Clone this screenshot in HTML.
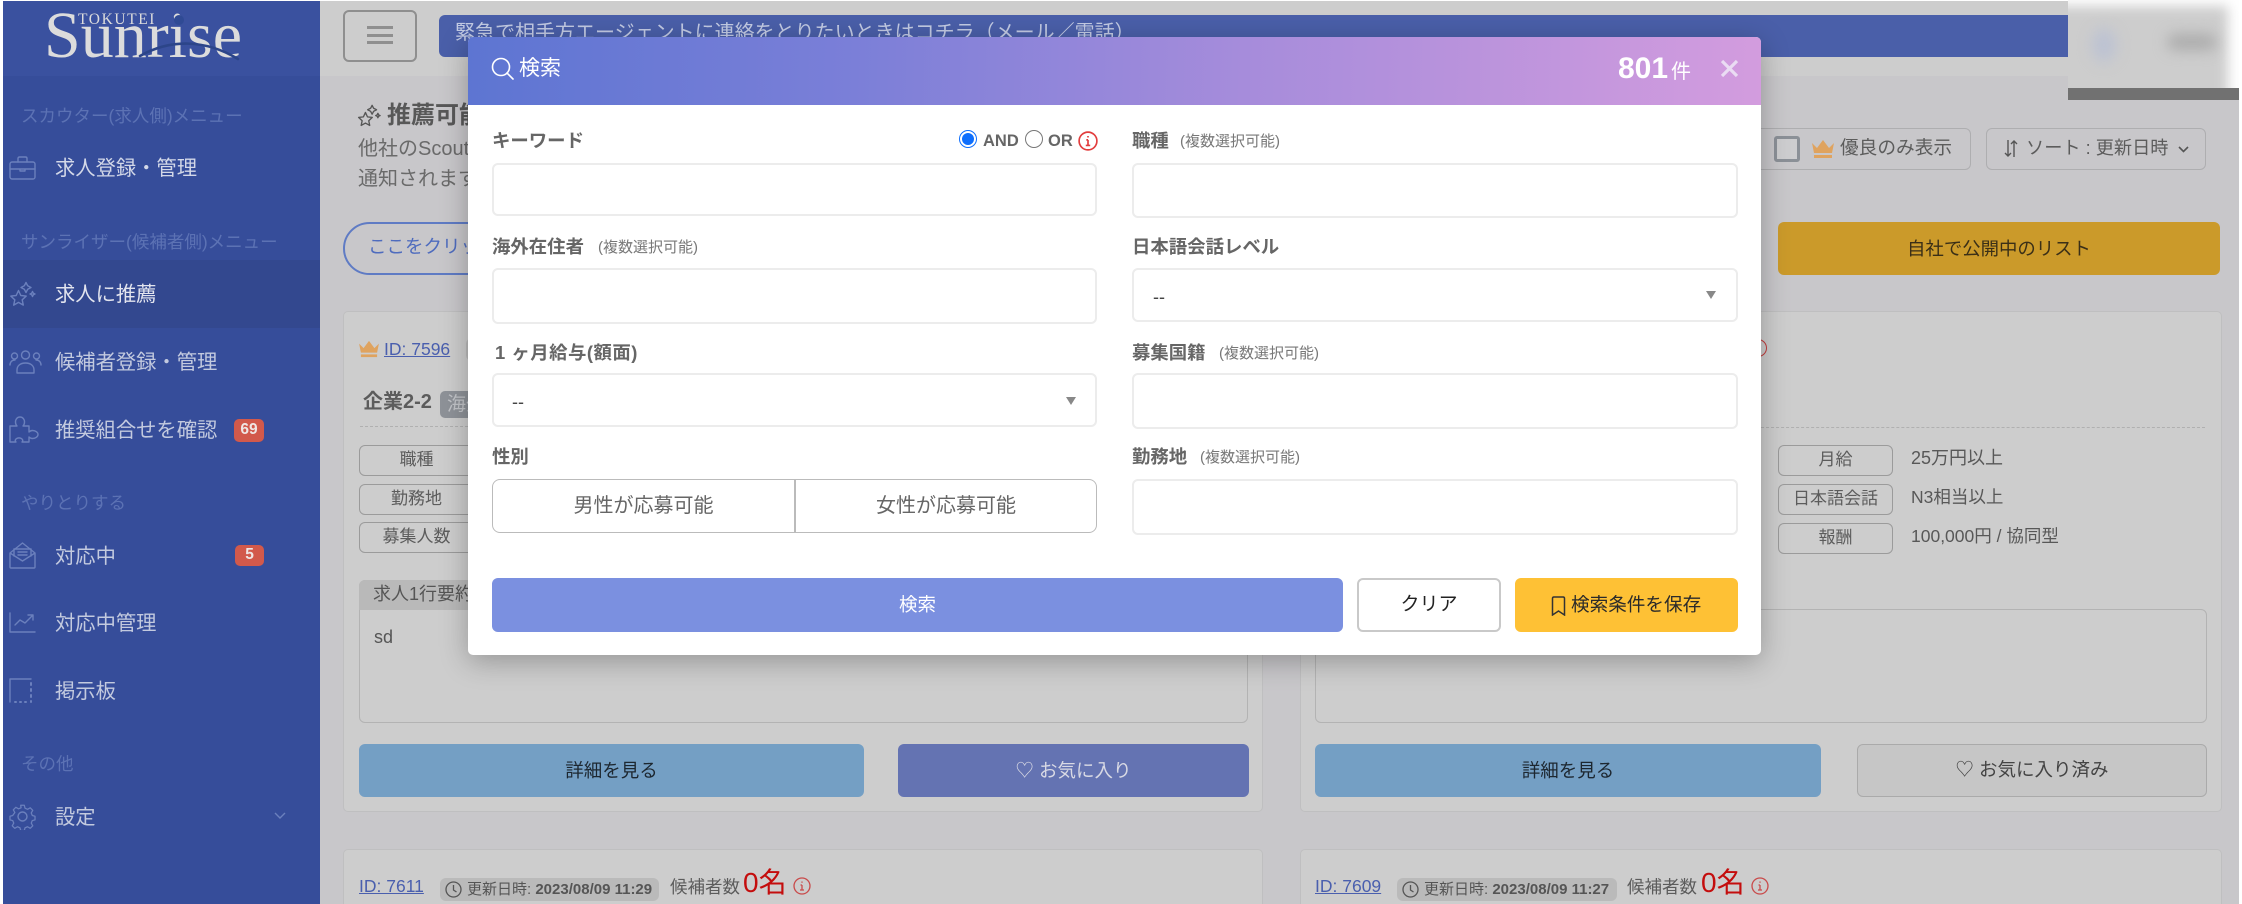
<!DOCTYPE html>
<html lang="ja"><head><meta charset="utf-8"><title>検索</title>
<style>
html,body{margin:0;padding:0;background:#fff;width:2242px;height:904px;overflow:hidden}
body{position:relative;font-family:"Liberation Sans","Noto Sans CJK JP",sans-serif;color:#666}
div,span,a,svg{position:absolute;box-sizing:border-box}
#root{left:0;top:0;width:2242px;height:904px;overflow:hidden;background:#fff}
.t{line-height:30px;height:30px;white-space:nowrap}
.menu{left:55px;font-size:20.3px;color:#c3cadf;margin-top:1px}
.sec{left:21px;font-size:17.5px;color:#5c72b4}
.badge{background:#d2594b;color:#efe6e4;font-weight:bold;font-size:15.5px;border-radius:5px;text-align:center}
.ic{fill:none;stroke:#6b80bd;stroke-width:1.4;stroke-linecap:round;stroke-linejoin:round}
.card{background:#cdcdcd;border:1px solid #bfbfc0;border-radius:5px}
.tag{width:115px;height:31px;border:1.5px solid #9b9b9b;border-radius:6px;text-align:center;font-size:17px;line-height:28px;color:#5c5c5c;white-space:nowrap;left:0}
.val{font-size:18px;color:#585858}
.btn{border-radius:6px;text-align:center;font-size:18.5px;line-height:53px;white-space:nowrap}
.id{font-size:17.5px;color:#4a5fae;text-decoration:underline}
.pill{background:#bababa;border-radius:6px;height:23px;font-size:15px;line-height:23px;color:#555;white-space:nowrap}
.lb{font-size:18.4px;font-weight:bold;color:#666}
.sub{font-size:15px;color:#777}
.inp{background:#fff;border:2px solid #ececec;border-radius:6px}
.arr{width:0;height:0;border-left:5.5px solid transparent;border-right:5.5px solid transparent;border-top:8px solid #888}
</style></head>
<body>
<div id="root">
<!-- main bg -->
<div style="left:0;top:1px;width:2239px;height:903px;background:#c8c7ca"></div>
<div style="left:320px;top:1px;width:1919px;height:75px;background:#cdcdcd"></div>

<!-- sidebar -->
<div style="left:0;top:0;width:3px;height:904px;background:#fff"></div>
<div style="left:3px;top:1px;width:317px;height:903px;background:#364d9a"></div>
<div style="left:3px;top:1px;width:317px;height:75px;background:#3a519f"></div>
<div style="left:3px;top:260px;width:317px;height:68px;background:#33488f"></div>

<div class="t" style="left:44px;top:-2px;height:76px;line-height:76px;font-family:'Liberation Serif',serif;font-size:66px;color:#dcdcdc">Sunrise</div>
<div style="left:78px;top:11px;font-family:'Liberation Serif',serif;font-size:15.5px;letter-spacing:1.6px;color:#dcdcdc;line-height:17px;white-space:nowrap">TOKUTEI</div>
<svg style="left:130px;top:10px" width="115" height="55" viewBox="0 0 115 55"><circle cx="49" cy="10" r="5" fill="#2f4a94"/><path d="M10 46C40 29 75 29 108 49" fill="none" stroke="#2c4589" stroke-width="2.6" stroke-linecap="round"/></svg>

<div class="t sec" style="top:101px">スカウター(求人側)メニュー</div>
<div class="t menu" style="top:153px;color:#d3d8e8">求人登録・管理</div>
<div class="t sec" style="top:227px">サンライザー(候補者側)メニュー</div>
<div class="t menu" style="top:279px;color:#e2e4ee">求人に推薦</div>
<div class="t menu" style="top:347px">候補者登録・管理</div>
<div class="t menu" style="top:415px">推奨組合せを確認</div>
<div class="badge" style="left:234px;top:419px;width:30px;height:23px;line-height:22px">69</div>
<div class="t sec" style="top:488px">やりとりする</div>
<div class="t menu" style="top:541px">対応中</div>
<div class="badge" style="left:235px;top:545px;width:29px;height:21px;line-height:20px">5</div>
<div class="t menu" style="top:608px">対応中管理</div>
<div class="t menu" style="top:676px">掲示板</div>
<div class="t sec" style="top:749px">その他</div>
<div class="t menu" style="top:802px">設定</div>

<!-- sidebar icons -->
<svg class="ic" style="left:9px;top:156px" width="27" height="24" viewBox="0 0 27 24"><rect x="1" y="6" width="25" height="17" rx="2"/><path d="M9 6V2.500C9 1.600 9.600 1 10.500 1h6c.9 0 1.500.6 1.500 1.500V6M1 13h25M11 13v2h5v-2"/></svg>
<svg class="ic" style="left:9px;top:281px" width="27" height="27" viewBox="0 0 27 27"><path d="M9.500 9.500l2.300 5 5.400.6-4 3.700 1.100 5.300-4.800-2.700-4.800 2.700 1.100-5.300-4-3.700 5.400-.6z"/><path d="M17 1.500l1.700 3.300 3.300 1.700-3.300 1.700L17 11.500l-1.700-3.300L12 6.500l3.300-1.700zM23.500 10.500l.8 1.700 1.700.8-1.700.8-.8 1.700-.8-1.700L21 13l1.700-.8z"/></svg>
<svg class="ic" style="left:9px;top:350px" width="33" height="24" viewBox="0 0 33 24"><circle cx="16.500" cy="5" r="4"/><circle cx="5.500" cy="6" r="3"/><circle cx="27.500" cy="6" r="3"/><path d="M8 23v-3c0-4 3-7 8.500-7S25 16 25 20v3zM1 15c0-3 2-5 5-5M32 15c0-3-2-5-5-5"/></svg>
<svg class="ic" style="left:9px;top:416px" width="30" height="27" viewBox="0 0 30 27"><path d="M1 10h7c-1-1-1.500-2.500-1.500-4C6.500 3 8.500 1 11 1s4.500 2 4.500 5c0 1.500-.5 3-1.500 4h6v6c1-1 2-1.500 3.500-1.500 3 0 5.500 1.800 5.500 4s-2.500 4-5.500 4c-1.500 0-2.500-.5-3.500-1.500v5H13c1-1 1-2 0-3-1.500-1.500-4.500-1.500-6 0-1 1-1 2 0 3H1z"/></svg>
<svg class="ic" style="left:9px;top:542px" width="27" height="27" viewBox="0 0 27 27"><path d="M1 11v14c0 .6.400 1 1 1h23c.6 0 1-.4 1-1V11L13.500 1zM1 11l12.500 8L26 11"/><path d="M5 14V7h17v7M9 10h9M9 13h9"/></svg>
<svg class="ic" style="left:9px;top:612px" width="27" height="21" viewBox="0 0 27 21"><path d="M1 1v19h25M6 13l5-5 5 3 8-8M19 3h5v5"/></svg>
<svg class="ic" style="left:9px;top:678px" width="24" height="25" viewBox="0 0 24 25"><path d="M1 24V1h21"/><path d="M22 5v2M22 11v2M22 17v2M22 23v1M6 24h1M11 24h1M16 24h1" stroke-width="2"/></svg>
<svg class="ic" style="left:9px;top:803px" width="27" height="27" viewBox="0 0 27 27"><circle cx="13.500" cy="13.500" r="4.500"/><path d="M11.500 1h4l.8 3.300 2.800 1.200 3-1.700 2.800 2.800-1.700 3 1.200 2.800 3 .8v4l-3 .8-1.200 2.800 1.700 3-2.800 2.800-3-1.700-2.800 1.200-.8 3h-4l-.8-3-2.800-1.200-3 1.700-2.800-2.800 1.700-3-1.200-2.800-3-.8v-4l3-.8L5 9.100l-1.700-3 2.800-2.800 3 1.700 2.800-1.200z" transform="translate(1.350 1.350) scale(.9)"/></svg>
<svg style="left:274px;top:812px;fill:none;stroke:#6b80bd;stroke-width:1.4" width="12" height="8" viewBox="0 0 12 8"><path d="M1 1l5 5 5-5"/></svg>

<!-- header -->
<div style="left:343px;top:10px;width:74px;height:52px;border:2px solid #8f8f8f;border-radius:6px"></div>
<div style="left:367px;top:26px;width:26px;height:2.500px;background:#8f8f8f"></div>
<div style="left:367px;top:34px;width:26px;height:2.500px;background:#8f8f8f"></div>
<div style="left:367px;top:41px;width:26px;height:2.500px;background:#8f8f8f"></div>
<div style="left:439px;top:15px;width:1629px;height:42px;background:#4a5fa9;border-radius:6px 0 0 6px"></div>
<div class="t" style="left:455px;top:18px;font-size:20px;color:#c3cbe4">緊急で相手方エージェントに連絡をとりたいときはコチラ（メール／電話）</div>

<!-- blurred account -->
<div style="left:2068px;top:0;width:171px;height:88px;background:#fff;overflow:hidden">
 <div style="left:-20px;top:6px;width:180px;height:100px;background:#cdcdcd;filter:blur(6px)"></div>
 <div style="left:24px;top:28px;width:24px;height:34px;border-radius:50%;background:#bcc2d2;filter:blur(7px)"></div>
 <div style="left:100px;top:34px;width:48px;height:16px;border-radius:6px;background:#ababab;filter:blur(7px)"></div>
</div>
<div style="left:2068px;top:88px;width:171px;height:12px;background:#717171"></div>

<!-- title -->
<svg style="left:357px;top:104px;fill:none;stroke:#555;stroke-width:1.500;stroke-linejoin:round" width="24" height="24" viewBox="0 0 27 27"><path d="M9.500 9.500l2.300 5 5.400.6-4 3.700 1.100 5.300-4.800-2.700-4.800 2.700 1.100-5.300-4-3.700 5.400-.6z"/><path d="M17 1.500l1.700 3.300 3.300 1.700-3.300 1.700-1.700 3.300-1.700-3.300-3.300-1.700 3.300-1.700zM23.500 10.500l.8 1.700 1.700.8-1.700.8-.8 1.700-.8-1.700-1.700-.8 1.700-.8z"/></svg>
<div class="t" style="left:387px;top:101px;font-size:24px;font-weight:bold;color:#585858">推薦可能な求人</div>
<div class="t" style="left:358px;top:134px;font-size:20px;color:#6a6a6a">他社のScoutが公開している求人</div>
<div class="t" style="left:358px;top:164px;font-size:20px;color:#6a6a6a">通知されます</div>
<div style="left:343px;top:222px;width:300px;height:53px;border:2px solid #5f7bc4;border-radius:27px"></div>
<div class="t" style="left:368px;top:232px;font-size:18.500px;color:#4f6cbe">ここをクリック</div>

<!-- toolbar right -->
<div style="left:1500px;top:128px;width:471px;height:42px;border:1.500px solid #aeaeb0;border-radius:6px"></div>
<div style="left:1774px;top:136px;width:26px;height:26px;border:3px solid #8b9097;border-radius:3px;background:#cdcdcf"></div>
<svg style="left:1811px;top:139px" width="24" height="20" viewBox="0 0 24 20"><path d="M1 4l5 5 6-8 6 8 5-5-2 10H3z" fill="#dfa35f"/><rect x="3" y="16" width="18" height="3" fill="#dfa35f"/></svg>
<div class="t" style="left:1840px;top:133px;font-size:18.700px;color:#5c5c5c">優良のみ表示</div>
<div style="left:1986px;top:128px;width:220px;height:42px;border:1.500px solid #aeaeb0;border-radius:6px"></div>
<svg style="left:2004px;top:139px;fill:none;stroke:#555;stroke-width:1.400" width="14" height="19" viewBox="0 0 14 19"><path d="M4 1v16M1 14l3 3 3-3M10 18V2M7 5l3-3 3 3"/></svg>
<div class="t" style="left:2026px;top:133px;font-size:18.200px;color:#5c5c5c">ソート : 更新日時</div>
<svg style="left:2178px;top:146px;fill:none;stroke:#555;stroke-width:1.600" width="11" height="7" viewBox="0 0 11 7"><path d="M1 1l4.500 4.500L10 1"/></svg>
<div class="btn" style="left:1778px;top:222px;width:442px;height:53px;background:#cb9a2a;color:#3a2f17;font-size:18.400px">自社で公開中のリスト</div>

<!-- left card -->
<div class="card" style="left:343px;top:311px;width:920px;height:501px"></div>
<svg style="left:358px;top:340px" width="22" height="18" viewBox="0 0 24 20"><path d="M1 4l5 5 6-8 6 8 5-5-2 10H3z" fill="#dfa35f"/><rect x="3" y="16" width="18" height="3" fill="#dfa35f"/></svg>
<div class="t id" style="left:384px;top:334px">ID: 7596</div>
<div style="left:466px;top:338px;width:10px;height:23px;background:#bababa;border-radius:6px 0 0 6px"></div>
<div class="t" style="left:363px;top:387px;font-size:20px;font-weight:bold;color:#5c5c5c">企業2-2</div>
<div class="t" style="left:440px;top:391px;width:60px;height:27px;background:#8e9298;border-radius:5px;font-size:19px;line-height:27px;padding-left:7px;color:#c2c4c8">海外</div>
<div style="left:360px;top:426px;width:888px;border-top:1.500px dashed #b0b0b0"></div>
<div class="tag" style="left:359px;top:445px">職種</div>
<div class="tag" style="left:359px;top:484px">勤務地</div>
<div class="tag" style="left:359px;top:522px">募集人数</div>
<div style="left:359px;top:580px;width:889px;height:143px;border:1.500px solid #b3b3b3;border-radius:6px"></div>
<div style="left:359px;top:580px;width:889px;height:30px;background:#b9b9b9;border-radius:6px 6px 0 0"></div>
<div class="t" style="left:373px;top:579px;font-size:18px;color:#555">求人1行要約</div>
<div class="t" style="left:374px;top:622px;font-size:18px;color:#555">sd</div>
<div class="btn" style="left:359px;top:744px;width:505px;height:53px;background:#749fc4;color:#1d2730">詳細を見る</div>
<div class="btn" style="left:898px;top:744px;width:351px;height:53px;background:#6473b2;color:#d8d9e4">♡ お気に入り</div>

<!-- right card -->
<div class="card" style="left:1300px;top:311px;width:922px;height:501px"></div>
<div style="left:1749px;top:339px;width:18px;height:18px;border:1.500px solid #c43b3b;border-radius:50%"></div>
<div style="left:1300px;top:427px;width:905px;border-top:1.500px dashed #b0b0b0"></div>
<div class="tag" style="left:1778px;top:445px">月給</div>
<div class="tag" style="left:1778px;top:484px">日本語会話</div>
<div class="tag" style="left:1778px;top:523px">報酬</div>
<div class="t val" style="left:1911px;top:443px">25万円以上</div>
<div class="t val" style="left:1911px;top:482px;font-size:17.500px">N3相当以上</div>
<div class="t val" style="left:1911px;top:521px;font-size:17.500px">100,000円 / 協同型</div>
<div style="left:1315px;top:609px;width:892px;height:114px;border:1.500px solid #b3b3b3;border-radius:6px"></div>
<div class="btn" style="left:1315px;top:744px;width:506px;height:53px;background:#749fc4;color:#1d2730">詳細を見る</div>
<div class="btn" style="left:1857px;top:744px;width:350px;height:53px;background:#c6c6c6;border:1.500px solid #aaa;line-height:50px;color:#444">♡ お気に入り済み</div>

<!-- second row -->
<div class="card" style="left:343px;top:849px;width:920px;height:70px"></div>
<div class="card" style="left:1300px;top:849px;width:922px;height:70px"></div>
<div class="t id" style="left:359px;top:871px">ID: 7611</div>
<div class="pill" style="left:440px;top:878px;width:219px;padding-left:27px">更新日時: <b style="font-weight:bold">2023/08/09 11:29</b></div>
<svg style="left:445px;top:881px;fill:none;stroke:#555;stroke-width:1.300" width="17" height="17" viewBox="0 0 17 17"><circle cx="8.500" cy="8.500" r="7.500"/><path d="M8.500 4v5l3 2"/></svg>
<div class="t" style="left:670px;top:872px;font-size:17.500px;color:#5c5c5c">候補者数</div>
<div class="t" style="left:743px;top:868px;font-size:28px;color:#c40d0d">0名</div>
<svg style="left:793px;top:877px;fill:none;stroke:#c94a4a;stroke-width:1.300" width="18" height="18" viewBox="0 0 18 18"><circle cx="9" cy="9" r="8"/><path d="M9 8v5M7 13h4M7.500 8H9M9 4.500v1.300"/></svg>
<div class="t id" style="left:1315px;top:871px">ID: 7609</div>
<div class="pill" style="left:1397px;top:878px;width:220px;padding-left:27px">更新日時: <b style="font-weight:bold">2023/08/09 11:27</b></div>
<svg style="left:1402px;top:881px;fill:none;stroke:#555;stroke-width:1.300" width="17" height="17" viewBox="0 0 17 17"><circle cx="8.500" cy="8.500" r="7.500"/><path d="M8.500 4v5l3 2"/></svg>
<div class="t" style="left:1627px;top:872px;font-size:17.500px;color:#5c5c5c">候補者数</div>
<div class="t" style="left:1701px;top:868px;font-size:28px;color:#c40d0d">0名</div>
<svg style="left:1751px;top:877px;fill:none;stroke:#c94a4a;stroke-width:1.300" width="18" height="18" viewBox="0 0 18 18"><circle cx="9" cy="9" r="8"/><path d="M9 8v5M7 13h4M7.500 8H9M9 4.500v1.300"/></svg>

<!-- modal -->
<div style="left:468px;top:37px;width:1293px;height:618px;background:#fff;border-radius:5px;box-shadow:0 6px 28px rgba(0,0,0,.28)"></div>
<div style="left:468px;top:37px;width:1293px;height:68px;background:linear-gradient(92deg,#5d75d2 0%,#7b7fd8 30%,#a68cdb 60%,#d39cde 100%);border-radius:5px 5px 0 0"></div>
<svg style="left:491px;top:57px;fill:none;stroke:#fff;stroke-width:1.600;stroke-linecap:round" width="23" height="23" viewBox="0 0 23 23"><circle cx="10" cy="10" r="8.500"/><path d="M16 16l6 6"/></svg>
<div class="t" style="left:519px;top:54px;font-size:21px;color:#fff">検索</div>
<div class="t" style="left:1618px;top:54px;font-size:30px;font-weight:bold;color:#fff">801</div>
<div class="t" style="left:1671px;top:57px;font-size:20px;color:#fff">件</div>
<svg style="left:1720px;top:59px;fill:none;stroke:#eadcf3;stroke-width:3.200" width="19" height="19" viewBox="0 0 19 19"><path d="M2 2l15 15M17 2L2 17"/></svg>

<!-- left col -->
<div class="t lb" style="left:492px;top:126px">キーワード</div>
<div style="left:959px;top:130px;width:18px;height:18px;border:1.500px solid #0d6efd;border-radius:50%;background:#fff"></div>
<div style="left:962px;top:133px;width:12px;height:12px;background:#0d6efd;border-radius:50%"></div>
<div class="t" style="left:983px;top:126px;font-size:16.500px;font-weight:bold;color:#666">AND</div>
<div style="left:1025px;top:130px;width:18px;height:18px;border:1.300px solid #777;border-radius:50%"></div>
<div class="t" style="left:1048px;top:126px;font-size:16.500px;font-weight:bold;color:#666">OR</div>
<svg style="left:1078px;top:131px;fill:none;stroke:#e23d3d;stroke-width:1.500" width="20" height="20" viewBox="0 0 18 18"><circle cx="9" cy="9" r="8"/><path d="M9 8v5M7 13h4M7.500 8H9M9 4.500v1.300"/></svg>
<div class="inp" style="left:492px;top:163px;width:605px;height:53px"></div>

<div class="t lb" style="left:492px;top:232px">海外在住者</div>
<div class="t sub" style="left:598px;top:233px">(複数選択可能)</div>
<div class="inp" style="left:492px;top:268px;width:605px;height:56px"></div>

<div class="t lb" style="left:495px;top:338px;letter-spacing:.5px">1 ヶ月給与(額面)</div>
<div class="inp" style="left:492px;top:373px;width:605px;height:54px"></div>
<div class="t" style="left:512px;top:387px;font-size:18px;color:#444">--</div>
<div class="arr" style="left:1066px;top:397px"></div>

<div class="t lb" style="left:492px;top:442px">性別</div>
<div style="left:492px;top:479px;width:605px;height:54px;border:1.500px solid #bbb;border-radius:8px"></div>
<div style="left:794px;top:479px;width:1.500px;height:54px;background:#bbb"></div>
<div class="t" style="left:492px;top:491px;width:303px;text-align:center;font-size:20px;color:#666">男性が応募可能</div>
<div class="t" style="left:795px;top:491px;width:302px;text-align:center;font-size:20px;color:#666">女性が応募可能</div>

<div class="btn" style="left:492px;top:578px;width:851px;height:54px;background:#7b90e0;color:#fff;font-size:18.500px">検索</div>

<!-- right col -->
<div class="t lb" style="left:1132px;top:126px">職種</div>
<div class="t sub" style="left:1180px;top:127px">(複数選択可能)</div>
<div class="inp" style="left:1132px;top:163px;width:606px;height:55px"></div>

<div class="t lb" style="left:1132px;top:232px">日本語会話レベル</div>
<div class="inp" style="left:1132px;top:268px;width:606px;height:54px"></div>
<div class="t" style="left:1153px;top:282px;font-size:18px;color:#444">--</div>
<div class="arr" style="left:1706px;top:291px"></div>

<div class="t lb" style="left:1132px;top:338px">募集国籍</div>
<div class="t sub" style="left:1219px;top:339px">(複数選択可能)</div>
<div class="inp" style="left:1132px;top:373px;width:606px;height:56px"></div>

<div class="t lb" style="left:1132px;top:442px">勤務地</div>
<div class="t sub" style="left:1200px;top:443px">(複数選択可能)</div>
<div class="inp" style="left:1132px;top:479px;width:606px;height:56px"></div>

<div class="btn" style="left:1357px;top:578px;width:144px;height:54px;background:#fff;border:2px solid #c9c9c9;line-height:50px;color:#222;font-size:19px">クリア</div>
<div class="btn" style="left:1515px;top:578px;width:223px;height:54px;background:#fec135"></div>
<svg style="left:1551px;top:596px;fill:none;stroke:#333;stroke-width:1.500" width="15" height="20" viewBox="0 0 15 20"><path d="M1.500 19V2.500c0-.8.500-1.500 1.300-1.500h9.400c.8 0 1.300.7 1.300 1.500V19l-6-4z"/></svg>
<div class="t" style="left:1571px;top:590px;font-size:18.600px;color:#2a2a2a">検索条件を保存</div>
</div>
</body></html>
